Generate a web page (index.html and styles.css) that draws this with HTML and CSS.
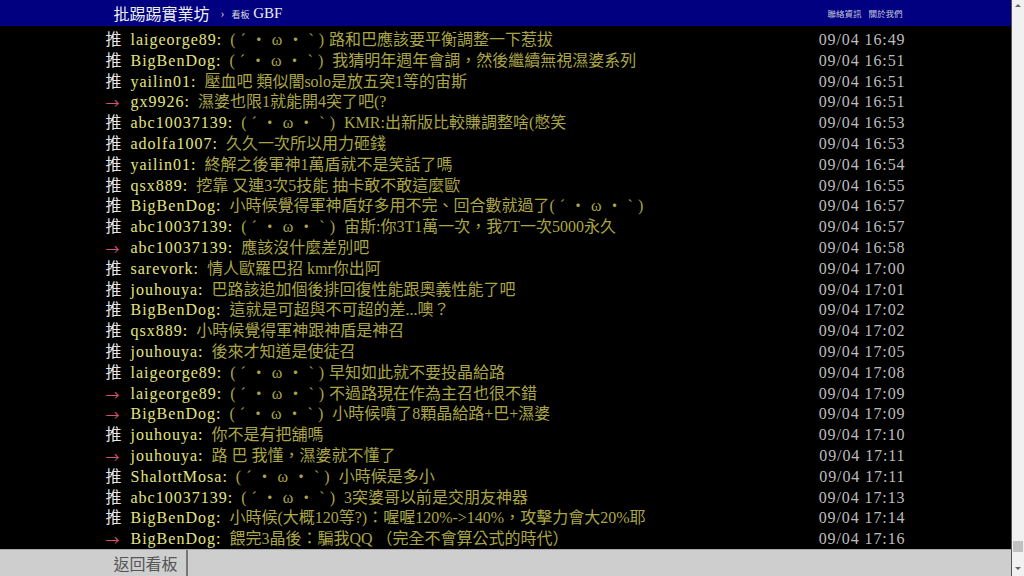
FILE: index.html
```html
<!DOCTYPE html>
<html lang="zh-tw">
<head>
    <meta charset="UTF-8">
    <meta name="viewport" content="width=device-width, initial-scale=1.0">
    <title>批踢踢實業坊 › 看板 GBF</title>
    <link rel="stylesheet" href="styles.css">
</head>
<body>

    <div class="window">

        <!-- Barra superior -->
        <div class="topbar">
            <div class="topbar-inner">
                <a class="logo" href="#">批踢踢實業坊</a>
                <span class="sep">›</span>
                <a class="board" href="#"><span class="board-label">看板</span> GBF</a>
                <div class="right">
                    <a href="#">聯絡資訊</a>
                    <a href="#">關於我們</a>
                </div>
            </div>
        </div>

        <!-- Comentários -->
        <div class="main">
            <div class="pushes">
                <div class="push"><span class="tag">推</span><span class="uid">laigeorge89:</span><span class="content"><span class="kao">(ˊ・ω・ˋ)</span>路和巴應該要平衡調整一下惹拔</span><span class="time">09/04 16:49</span></div>
                <div class="push"><span class="tag">推</span><span class="uid">BigBenDog:</span><span class="content"><span class="kao">(ˊ・ω・`)</span> 我猜明年週年會調，然後繼續無視濕婆系列</span><span class="time">09/04 16:51</span></div>
                <div class="push"><span class="tag">推</span><span class="uid">yailin01:</span><span class="content">壓血吧 類似闇solo是放五突1等的宙斯</span><span class="time">09/04 16:51</span></div>
                <div class="push"><span class="tag arrow">→</span><span class="uid">gx9926:</span><span class="content">濕婆也限1就能開4突了吧(?</span><span class="time">09/04 16:51</span></div>
                <div class="push"><span class="tag">推</span><span class="uid">abc10037139:</span><span class="content"><span class="kao">(ˊ・ω・ˋ)</span> KMR:出新版比較賺調整啥(憋笑</span><span class="time">09/04 16:53</span></div>
                <div class="push"><span class="tag">推</span><span class="uid">adolfa1007:</span><span class="content">久久一次所以用力砸錢</span><span class="time">09/04 16:53</span></div>
                <div class="push"><span class="tag">推</span><span class="uid">yailin01:</span><span class="content">終解之後軍神1萬盾就不是笑話了嗎</span><span class="time">09/04 16:54</span></div>
                <div class="push"><span class="tag">推</span><span class="uid">qsx889:</span><span class="content">挖靠 又連3次5技能 抽卡敢不敢這麼歐</span><span class="time">09/04 16:55</span></div>
                <div class="push"><span class="tag">推</span><span class="uid">BigBenDog:</span><span class="content">小時候覺得軍神盾好多用不完、回合數就過了<span class="kao">(ˊ・ω・`)</span></span><span class="time">09/04 16:57</span></div>
                <div class="push"><span class="tag">推</span><span class="uid">abc10037139:</span><span class="content"><span class="kao">(ˊ・ω・ˋ)</span> 宙斯:你3T1萬一次，我7T一次5000永久</span><span class="time">09/04 16:57</span></div>
                <div class="push"><span class="tag arrow">→</span><span class="uid">abc10037139:</span><span class="content">應該沒什麼差別吧</span><span class="time">09/04 16:58</span></div>
                <div class="push"><span class="tag">推</span><span class="uid">sarevork:</span><span class="content">情人歐羅巴招 kmr你出阿</span><span class="time">09/04 17:00</span></div>
                <div class="push"><span class="tag">推</span><span class="uid">jouhouya:</span><span class="content">巴路該追加個後排回復性能跟奧義性能了吧</span><span class="time">09/04 17:01</span></div>
                <div class="push"><span class="tag">推</span><span class="uid">BigBenDog:</span><span class="content">這就是可超與不可超的差...噢？</span><span class="time">09/04 17:02</span></div>
                <div class="push"><span class="tag">推</span><span class="uid">qsx889:</span><span class="content">小時候覺得軍神跟神盾是神召</span><span class="time">09/04 17:02</span></div>
                <div class="push"><span class="tag">推</span><span class="uid">jouhouya:</span><span class="content">後來才知道是使徒召</span><span class="time">09/04 17:05</span></div>
                <div class="push"><span class="tag">推</span><span class="uid">laigeorge89:</span><span class="content"><span class="kao">(ˊ・ω・ˋ)</span>早知如此就不要投晶給路</span><span class="time">09/04 17:08</span></div>
                <div class="push"><span class="tag arrow">→</span><span class="uid">laigeorge89:</span><span class="content"><span class="kao">(ˊ・ω・ˋ)</span>不過路現在作為主召也很不錯</span><span class="time">09/04 17:09</span></div>
                <div class="push"><span class="tag arrow">→</span><span class="uid">BigBenDog:</span><span class="content"><span class="kao">(ˊ・ω・`)</span> 小時候噴了8顆晶給路+巴+濕婆</span><span class="time">09/04 17:09</span></div>
                <div class="push"><span class="tag">推</span><span class="uid">jouhouya:</span><span class="content">你不是有把舖嗎</span><span class="time">09/04 17:10</span></div>
                <div class="push"><span class="tag arrow">→</span><span class="uid">jouhouya:</span><span class="content">路 巴 我懂，濕婆就不懂了</span><span class="time">09/04 17:11</span></div>
                <div class="push"><span class="tag">推</span><span class="uid">ShalottMosa:</span><span class="content"><span class="kao">(ˊ・ω・ˋ)</span> 小時候是多小</span><span class="time">09/04 17:11</span></div>
                <div class="push"><span class="tag">推</span><span class="uid">abc10037139:</span><span class="content"><span class="kao">(ˊ・ω・ˋ)</span> 3突婆哥以前是交朋友神器</span><span class="time">09/04 17:13</span></div>
                <div class="push"><span class="tag">推</span><span class="uid">BigBenDog:</span><span class="content">小時候(大概120等?)：喔喔120%-&gt;140%，攻擊力會大20%耶</span><span class="time">09/04 17:14</span></div>
                <div class="push"><span class="tag arrow">→</span><span class="uid">BigBenDog:</span><span class="content">餵完3晶後：騙我QQ （完全不會算公式的時代）</span><span class="time">09/04 17:16</span></div>
            </div>
        </div>

        <!-- Barra inferior -->
        <div class="bottombar">
            <div class="bottombar-inner">
                <a class="btn" href="#">返回看板</a>
            </div>
        </div>
    </div>

    <!-- Barra de rolagem -->
    <div class="scrollbar">
        <span class="sb-up"></span>
        <span class="sb-thumb"></span>
        <span class="sb-down"></span>
    </div>

</body>
</html>
```

FILE: styles.css
```css
/* Reset */
* {
    margin: 0;
    padding: 0;
    box-sizing: border-box;
}

body {
    font-family: 'Liberation Serif', 'Noto Sans CJK TC', serif;
    background-color: #000;
    color: #bbb;
    display: flex;
    height: 100vh;
    overflow: hidden;
}

a {
    text-decoration: none;
    color: inherit;
}

.window {
    flex: 1;
    display: flex;
    flex-direction: column;
    min-width: 0;
    border-right: 1px solid #555;
}

/* Barra superior */
.topbar {
    background-color: #000080;
    height: 26px;
    flex-shrink: 0;
}

.topbar-inner {
    width: 812px;
    margin: 0 auto;
    padding-left: 14px;
    display: flex;
    align-items: center;
    height: 100%;
}

.logo {
    color: #eee;
    font-size: 16px;
}

.sep {
    color: #ccc;
    font-size: 12px;
    margin: 0 7px 0 11px;
}

.board {
    color: #eee;
    font-size: 15px;
}

.board-label {
    font-size: 9px;
    color: #ddd;
}

.right {
    margin-left: auto;
    margin-right: 9px;
    font-size: 8.5px;
    color: #c8c8dd;
    display: flex;
    gap: 7px;
}

/* Comentários */
.main {
    flex: 1;
    overflow: hidden;
}

.pushes {
    width: 800px;
    margin: 0 auto;
    padding-top: 4px;
    font-size: 16px;
}

.push {
    display: flex;
    height: 20.8px;
    line-height: 20.8px;
    white-space: nowrap;
}

.tag {
    width: 25px;
    color: #e8e8e8;
    flex-shrink: 0;
}

.tag.arrow {
    font-family: 'Noto Sans CJK TC', sans-serif;
    font-size: 14px;
    color: #cf5470;
}

.uid {
    color: #e4e480;
    letter-spacing: 1px;
    padding-right: 8px;
}

.content {
    color: #aaa548;
    flex: 1;
    overflow: hidden;
}

.kao {
    letter-spacing: 5px;
}

.time {
    color: #bdbdbd;
    letter-spacing: 0.9px;
    margin-left: auto;
    flex-shrink: 0;
}

/* Barra inferior */
.bottombar {
    height: 27px;
    background-color: #cecece;
    flex-shrink: 0;
    border-top: 1px solid #aaa;
}

.bottombar-inner {
    width: 812px;
    margin: 0 auto;
    height: 100%;
    display: flex;
}

.btn {
    display: flex;
    align-items: center;
    padding: 0 8px 0 14px;
    border-right: 2px solid #777;
    color: #555;
    font-size: 16px;
}

/* Barra de rolagem */
.scrollbar {
    width: 12px;
    background-color: #f1f1f1;
    display: flex;
    flex-direction: column;
    align-items: center;
    flex-shrink: 0;
}

.sb-up,
.sb-down {
    width: 0;
    height: 0;
    border-left: 3px solid transparent;
    border-right: 3px solid transparent;
}

.sb-up {
    margin-top: 4px;
    border-bottom: 3px solid #666;
}

.sb-thumb {
    margin-top: auto;
    width: 10px;
    height: 11px;
    background-color: #c1c1c1;
    margin-bottom: 15px;
}

.sb-down {
    margin-bottom: 6px;
    border-top: 3px solid #666;
}
```
